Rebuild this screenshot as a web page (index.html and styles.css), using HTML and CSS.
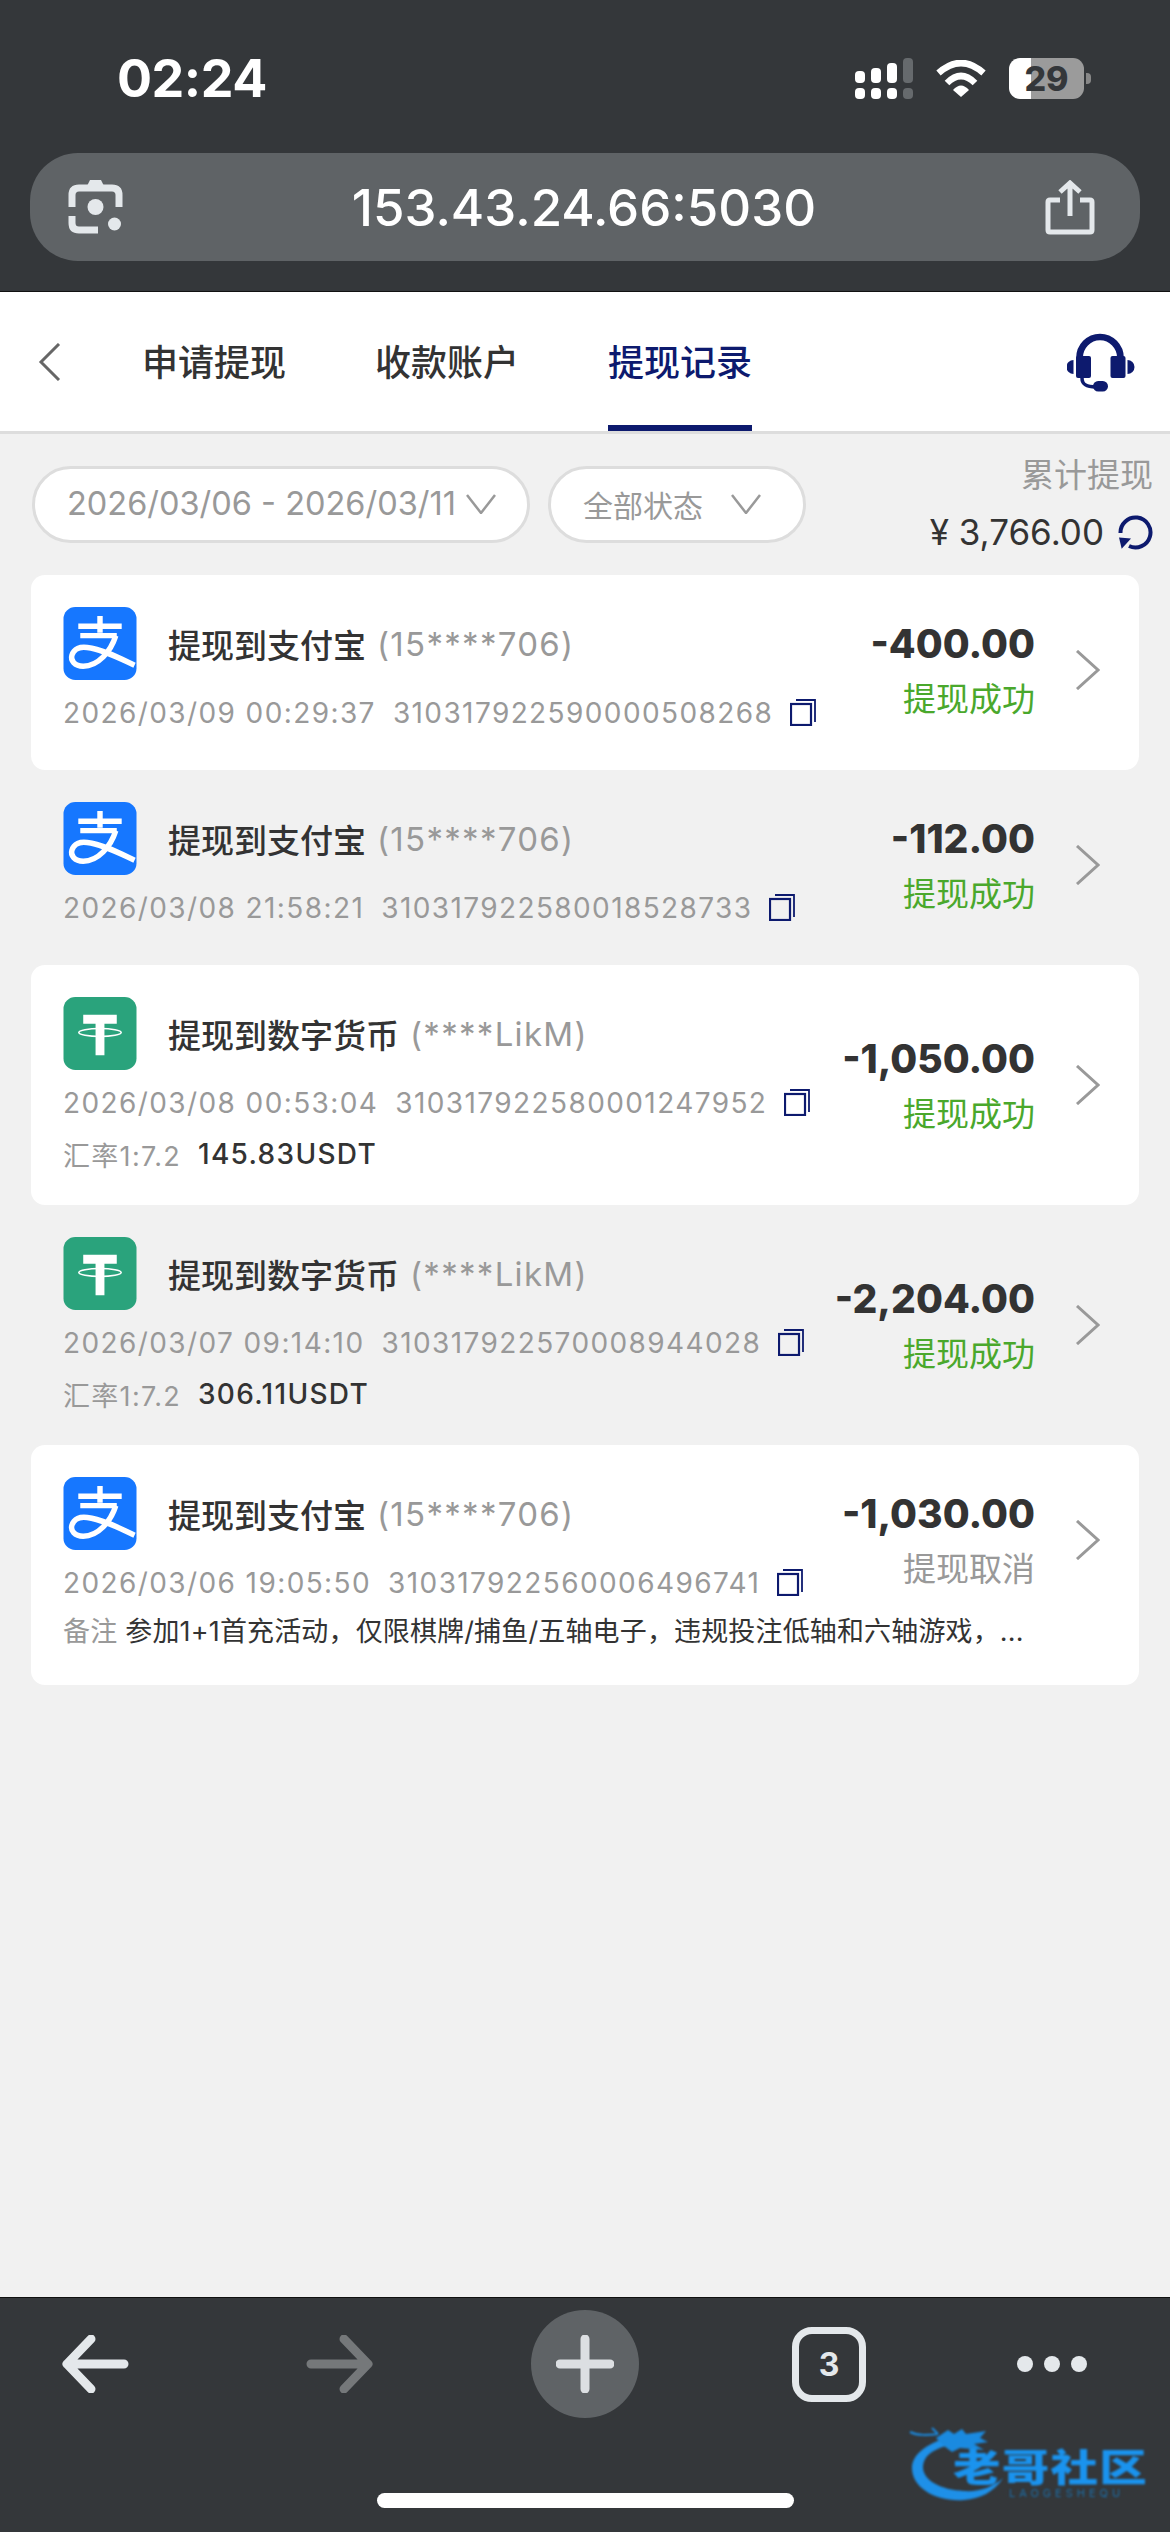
FILE: index.html
```html
<!DOCTYPE html>
<html lang="zh-CN">
<head>
    <meta charset="UTF-8">
    <meta name="viewport" content="width=device-width, initial-scale=1.0">
    <title>提现记录</title>
    <link rel="stylesheet" href="styles.css">
</head>
<body>
    <svg class="defs" width="0" height="0">
        <defs>
            <symbol id="alipay" viewBox="0 0 74 74">
                <rect width="74" height="74" rx="12" fill="#1677ff"/>
                <g fill="none" stroke="#fff" stroke-width="5.5">
                    <path d="M15 19.500H59M37 9V26M17 29H54"/>
                    <path d="M53 29C48 45 35 60 20 60C11 60 7 54 8.500 49C10.500 42 17 40 24 41C40 43 57 52 72 59"/>
                </g>
            </symbol>
            <symbol id="tether" viewBox="0 0 74 74">
                <rect width="74" height="74" rx="12" fill="#2aa37c"/>
                <path d="M20 18H54V27H41.500V59H32.500V27H20Z" fill="#fff"/>
                <ellipse cx="37" cy="36" rx="21.500" ry="4" fill="none" stroke="#fff" stroke-width="1.600"/>
            </symbol>
            <symbol id="copy" viewBox="0 0 26 27">
                <path d="M6 1H25V23" fill="none" stroke="#0d1a6e" stroke-width="1.800"/>
                <rect x="1" y="5" width="20" height="21" fill="none" stroke="#0d1a6e" stroke-width="2.200"/>
            </symbol>
            <symbol id="chevron" viewBox="0 0 25 40">
                <path d="M2 1L23 20L2 39" fill="none" stroke="#999" stroke-width="3"/>
            </symbol>
        </defs>
    </svg>

    <div class="page">
        <header class="browser-top">
            <div class="status-bar">
                <span class="clock">02:24</span>
                <div class="status-icons">
                    <svg class="signal" width="58" height="41" viewBox="0 0 58 41">
                        <g fill="#fff">
                            <rect x="0" y="13" width="10" height="12" rx="4"/>
                            <rect x="0" y="30" width="10" height="11" rx="4"/>
                            <rect x="16" y="10" width="10" height="15" rx="4"/>
                            <rect x="16" y="30" width="10" height="11" rx="4"/>
                            <rect x="32" y="5" width="10" height="20" rx="4"/>
                            <rect x="32" y="30" width="10" height="11" rx="4"/>
                        </g>
                        <g fill="#666a6d">
                            <rect x="48" y="0" width="10" height="25" rx="4"/>
                            <rect x="48" y="30" width="10" height="11" rx="4"/>
                        </g>
                    </svg>
                    <svg class="wifi" width="50" height="37" viewBox="0 0 50 37">
                        <g fill="none" stroke="#fff" stroke-width="6.500">
                            <path d="M2.500 13Q25 -7 47.500 13"/>
                            <path d="M11 23Q25 9 39 23"/>
                        </g>
                        <path d="M17 30Q25 21 33 30L25 37Z" fill="#fff"/>
                    </svg>
                    <div class="battery"><span>29</span></div>
                </div>
            </div>
            <div class="url-bar">
                <svg width="55" height="54" viewBox="0 0 55 54">
                    <g fill="none" stroke="#e4e8eb" stroke-width="7">
                        <path d="M4 27V15Q4 8 11 8H44Q51 8 51 15V27"/>
                        <path d="M4 36V43Q4 50 11 50H30"/>
                    </g>
                    <path d="M18 8L22 0H33L37 8Z" fill="#e4e8eb"/>
                    <circle cx="27.500" cy="27" r="8" fill="#e4e8eb"/>
                    <circle cx="46.500" cy="44" r="6.500" fill="#e4e8eb"/>
                </svg>
                <span class="url-text">153.43.24.66:5030</span>
                <svg width="50" height="55" viewBox="0 0 50 55">
                    <g fill="none" stroke="#e4e8eb" stroke-width="5">
                        <path d="M15 20H5Q3 20 3 22V50Q3 52 5 52H45Q47 52 47 50V22Q47 20 45 20H35"/>
                        <path d="M25 36V3M15 12L25 3L35 12"/>
                    </g>
                </svg>
            </div>
        </header>

        <nav class="tabs">
            <svg class="tabs-back" width="23" height="38" viewBox="0 0 23 38">
                <path d="M21 1L3 19L21 37" fill="none" stroke="#666" stroke-width="3"/>
            </svg>
            <a class="tab">申请提现</a>
            <a class="tab">收款账户</a>
            <a class="tab tab-active">提现记录</a>
            <svg class="headset" width="68" height="60" viewBox="27 20 68 60">
                <path d="M39.500 48V46A20.500 21 0 0 1 80.500 46V48" fill="none" stroke="#0d1a6e" stroke-width="6.700"/>
                <g fill="#0d1a6e">
                    <rect x="36" y="44" width="15" height="22" rx="2"/>
                    <rect x="70.500" y="44" width="15" height="22" rx="2"/>
                    <path d="M33.500 48A7 7 0 0 0 33.500 62Z"/>
                    <path d="M87.500 48A7 7 0 0 1 87.500 62Z"/>
                    <rect x="53" y="69" width="15" height="10.500" rx="5.200"/>
                </g>
                <path d="M42 66C42 73 47 75 56 75" fill="none" stroke="#0d1a6e" stroke-width="3.500"/>
            </svg>
        </nav>

        <main class="content">
            <div class="filter-bar">
                <div class="pill pill-date">
                    <span>2026/03/06 - 2026/03/11</span>
                    <svg width="30" height="20" viewBox="0 0 30 20"><path d="M1 1L15 19L29 1" fill="none" stroke="#999" stroke-width="2.500"/></svg>
                </div>
                <div class="pill pill-status">
                    <span>全部状态</span>
                    <svg width="30" height="20" viewBox="0 0 30 20"><path d="M1 1L15 19L29 1" fill="none" stroke="#999" stroke-width="2.500"/></svg>
                </div>
                <div class="total">
                    <div class="total-label">累计提现</div>
                    <div class="total-amount">
                        <span>¥ 3,766.00</span>
                        <svg width="35" height="35" viewBox="0 0 35 35">
                            <path d="M2.500 18A15 15 0 1 1 11 31" fill="none" stroke="#0d1a6e" stroke-width="4"/>
                            <path d="M1 22.500L13 23.500L3.700 33.700Z" fill="#0d1a6e"/>
                        </svg>
                    </div>
                </div>
            </div>

            <div class="records">
                <article class="record">
                    <div class="record-row">
                        <div class="record-main">
                            <div class="record-title">
                                <svg class="record-logo"><use href="#alipay"/></svg>
                                <span>提现到支付宝</span>
                                <span class="account">(15****706)</span>
                            </div>
                            <div class="record-meta">
                                <span>2026/03/09 00:29:37</span>
                                <span>310317922590000508268</span>
                                <svg class="copy"><use href="#copy"/></svg>
                            </div>
                        </div>
                        <div class="record-side">
                            <div class="amount">-400.00</div>
                            <div class="state state-ok">提现成功</div>
                        </div>
                        <svg class="arrow"><use href="#chevron"/></svg>
                    </div>
                </article>

                <article class="record">
                    <div class="record-row">
                        <div class="record-main">
                            <div class="record-title">
                                <svg class="record-logo"><use href="#alipay"/></svg>
                                <span>提现到支付宝</span>
                                <span class="account">(15****706)</span>
                            </div>
                            <div class="record-meta">
                                <span>2026/03/08 21:58:21</span>
                                <span>310317922580018528733</span>
                                <svg class="copy"><use href="#copy"/></svg>
                            </div>
                        </div>
                        <div class="record-side">
                            <div class="amount">-112.00</div>
                            <div class="state state-ok">提现成功</div>
                        </div>
                        <svg class="arrow"><use href="#chevron"/></svg>
                    </div>
                </article>

                <article class="record">
                    <div class="record-row">
                        <div class="record-main">
                            <div class="record-title">
                                <svg class="record-logo"><use href="#tether"/></svg>
                                <span>提现到数字货币</span>
                                <span class="account">(****LikM)</span>
                            </div>
                            <div class="record-meta">
                                <span>2026/03/08 00:53:04</span>
                                <span>310317922580001247952</span>
                                <svg class="copy"><use href="#copy"/></svg>
                            </div>
                            <div class="record-extra">
                                <span class="extra-label">汇率1:7.2</span>
                                <span class="extra-value">145.83USDT</span>
                            </div>
                        </div>
                        <div class="record-side">
                            <div class="amount">-1,050.00</div>
                            <div class="state state-ok">提现成功</div>
                        </div>
                        <svg class="arrow"><use href="#chevron"/></svg>
                    </div>
                </article>

                <article class="record">
                    <div class="record-row">
                        <div class="record-main">
                            <div class="record-title">
                                <svg class="record-logo"><use href="#tether"/></svg>
                                <span>提现到数字货币</span>
                                <span class="account">(****LikM)</span>
                            </div>
                            <div class="record-meta">
                                <span>2026/03/07 09:14:10</span>
                                <span>310317922570008944028</span>
                                <svg class="copy"><use href="#copy"/></svg>
                            </div>
                            <div class="record-extra">
                                <span class="extra-label">汇率1:7.2</span>
                                <span class="extra-value">306.11USDT</span>
                            </div>
                        </div>
                        <div class="record-side">
                            <div class="amount">-2,204.00</div>
                            <div class="state state-ok">提现成功</div>
                        </div>
                        <svg class="arrow"><use href="#chevron"/></svg>
                    </div>
                </article>

                <article class="record">
                    <div class="record-row">
                        <div class="record-main">
                            <div class="record-title">
                                <svg class="record-logo"><use href="#alipay"/></svg>
                                <span>提现到支付宝</span>
                                <span class="account">(15****706)</span>
                            </div>
                            <div class="record-meta">
                                <span>2026/03/06 19:05:50</span>
                                <span>310317922560006496741</span>
                                <svg class="copy"><use href="#copy"/></svg>
                            </div>
                        </div>
                        <div class="record-side">
                            <div class="amount">-1,030.00</div>
                            <div class="state state-off">提现取消</div>
                        </div>
                        <svg class="arrow"><use href="#chevron"/></svg>
                    </div>
                    <div class="record-note">
                        <span class="extra-label">备注</span>
                        <span>参加1+1首充活动，仅限棋牌/捕鱼/五轴电子，违规投注低轴和六轴游戏，...</span>
                    </div>
                </article>
            </div>
        </main>

        <footer class="browser-bottom">
            <div class="toolbar">
                <svg width="68" height="58" viewBox="0 0 68 58">
                    <path d="M63 29H6M30 4L6 29L30 54" fill="none" stroke="#e4e8eb" stroke-width="9" stroke-linecap="round" stroke-linejoin="round"/>
                </svg>
                <svg width="68" height="58" viewBox="0 0 68 58">
                    <path d="M5 29H62M38 4L62 29L38 54" fill="none" stroke="#75787a" stroke-width="9" stroke-linecap="round" stroke-linejoin="round"/>
                </svg>
                <div class="new-tab">
                    <svg width="58" height="58" viewBox="0 0 58 58">
                        <path d="M29 4V54M4 29H54" fill="none" stroke="#dcdfe2" stroke-width="9" stroke-linecap="round"/>
                    </svg>
                </div>
                <div class="tab-count">3</div>
                <div class="more"><i></i><i></i><i></i></div>
            </div>
            <div class="home-bar"></div>
            <div class="watermark">
                <svg class="watermark-dragon" width="110" height="85" viewBox="0 0 110 85">
                    <path d="M32 20C12 28 4 38 4 48C4 68 28 82 56 80C72 79 86 72 95 58C84 68 70 72 56 71C32 70 14 60 15 46C16 36 24 30 38 26Z" fill="#1e90e8"/>
                    <path d="M2 12C10 16 20 15 30 14M24 8L30 14" fill="none" stroke="#1a8ae0" stroke-width="2"/>
                    <path d="M28 18L40 10L46 14L54 9L58 14L78 11L72 18L80 22L66 24L76 30L52 28L44 32L36 26Z" fill="#1a8ae0"/>
                </svg>
                <span class="watermark-name">老哥社区</span>
                <span class="watermark-sub">LAOGESHEQU</span>
            </div>
        </footer>
    </div>
</body>
</html>
```

FILE: styles.css
```css
:root {
    --dark-bar: #34373a;
    --navy: #0d1a6e;
    --text-color: #333;
    --muted: #999;
    --background-color: #f1f1f1;
}

* {
    box-sizing: border-box;
}

body {
    margin: 0;
    background-color: var(--background-color);
    color: var(--text-color);
    font-family: Inter, "Noto Sans CJK SC", sans-serif;
}

.defs {
    position: absolute;
}

.page {
    display: flex;
    flex-direction: column;
    height: 2532px;
    overflow: hidden;
}

/* Browser chrome, top */
.browser-top {
    height: 292px;
    padding: 0 30px;
    background-color: var(--dark-bar);
    border-bottom: 1px solid #111;
    color: #fff;
}

.status-bar {
    display: flex;
    align-items: center;
    justify-content: space-between;
    height: 153px;
    padding: 3px 56px 0 87px;
}

.clock {
    font-size: 52px;
    font-weight: 700;
    letter-spacing: -0.5px;
}

.status-icons {
    display: flex;
    align-items: center;
    gap: 23px;
}

.battery {
    position: relative;
    width: 75px;
    height: 41px;
    border-radius: 11px;
    background: linear-gradient(90deg, #fff 29%, #9b9b9b 29%);
    color: #34373a;
    font-size: 34px;
    font-weight: 800;
    line-height: 41px;
    text-align: center;
}

.battery::after {
    content: "";
    position: absolute;
    top: 15px;
    right: -7px;
    width: 5px;
    height: 11px;
    border-radius: 0 4px 4px 0;
    background-color: #888;
}

.url-bar {
    display: flex;
    align-items: center;
    justify-content: space-between;
    height: 108px;
    padding: 0 45px 0 38px;
    border-radius: 48px;
    background-color: #5f6366;
}

.url-text {
    font-size: 51px;
    font-weight: 500;
}

/* Page tabs */
.tabs {
    display: flex;
    align-items: stretch;
    height: 142px;
    padding: 0 35px 0 38px;
    background-color: #fff;
    border-bottom: 3px solid #ddd;
}

.tabs-back {
    align-self: center;
    margin-right: 81px;
}

.tab {
    display: flex;
    align-items: center;
    margin-right: 89px;
    padding-top: 3px;
    border-bottom: 6px solid transparent;
    font-size: 36px;
    font-weight: 500;
}

.tab-active {
    border-bottom-color: var(--navy);
    color: var(--navy);
}

.headset {
    align-self: center;
    margin-left: auto;
}

/* Filters */
.content {
    flex: 1;
}

.filter-bar {
    display: flex;
    align-items: flex-start;
    height: 141px;
    padding: 21px 17px 0 32px;
}

.pill {
    display: flex;
    align-items: center;
    justify-content: space-between;
    height: 77px;
    margin-top: 11px;
    padding-bottom: 2px;
    border: 3px solid #ddd;
    border-radius: 39px;
    background-color: #fff;
    color: var(--muted);
    font-size: 32.5px;
}

.pill-date {
    width: 498px;
    padding-right: 31px;
    padding-left: 32px;
}

.pill-status {
    width: 258px;
    margin-left: 18px;
    padding-right: 42px;
    padding-left: 32px;
    font-size: 30px;
}

.total {
    margin-left: auto;
    text-align: right;
}

.total-label {
    color: var(--muted);
    font-size: 33px;
    line-height: 40px;
}

.total-amount {
    display: flex;
    align-items: center;
    gap: 14px;
    margin-top: 17px;
    font-size: 35px;
    line-height: 40px;
}

/* Records */
.records {
    padding: 0 31px;
}

.record {
    min-height: 195px;
    padding: 32px 39px 32px 32px;
    border-radius: 14px;
}

.record:nth-child(odd) {
    background-color: #fff;
}

.record-row {
    display: flex;
    align-items: center;
}

.record-main {
    flex: 1;
}

.record-title {
    display: flex;
    align-items: center;
    height: 73px;
    font-size: 33px;
    font-weight: 500;
}

.record-logo {
    width: 74px;
    height: 73px;
    margin-right: 31px;
}

.account {
    margin-left: 11px;
    color: var(--muted);
    font-weight: 400;
    letter-spacing: 1.3px;
}

.record-meta {
    display: flex;
    align-items: center;
    gap: 17px;
    height: 39px;
    margin-top: 13px;
    color: var(--muted);
    font-size: 28px;
    letter-spacing: 1.4px;
}

.copy {
    width: 26px;
    height: 27px;
}

.record-extra {
    display: flex;
    align-items: center;
    gap: 17px;
    height: 38px;
    margin-top: 13px;
    font-size: 27px;
    letter-spacing: 1.3px;
}

.extra-value {
    font-size: 28px;
    font-weight: 500;
}

.record-note {
    display: flex;
    align-items: center;
    gap: 8px;
    height: 38px;
    margin: 8px 0 5px;
    font-size: 27px;
    letter-spacing: 0.15px;
}

.extra-label {
    color: var(--muted);
}

.record-side {
    text-align: right;
}

.amount {
    font-size: 39px;
    font-weight: 800;
    line-height: 49px;
}

.state {
    margin-top: 9px;
    font-size: 33px;
    line-height: 44px;
}

.state-ok {
    color: #4aa82c;
}

.state-off {
    color: var(--muted);
}

.arrow {
    width: 25px;
    height: 40px;
    margin-left: 40px;
}

/* Browser chrome, bottom */
.browser-bottom {
    position: relative;
    height: 235px;
    background-color: var(--dark-bar);
    border-top: 1px solid #111;
}

.toolbar {
    display: grid;
    grid-template-columns: 190px 300px 190px 298px 148px;
    justify-items: center;
    align-items: center;
    height: 132px;
}

.new-tab {
    display: flex;
    align-items: center;
    justify-content: center;
    width: 108px;
    height: 108px;
    border-radius: 50%;
    background-color: #5f6366;
}

.tab-count {
    width: 74px;
    height: 75px;
    border: 7px solid #e4e8eb;
    border-radius: 20px;
    color: #e4e8eb;
    font-size: 32px;
    font-weight: 700;
    line-height: 61px;
    text-align: center;
}

.more {
    display: flex;
    gap: 11px;
}

.more i {
    width: 16px;
    height: 16px;
    border-radius: 50%;
    background-color: #e4e8eb;
}

.home-bar {
    width: 417px;
    height: 15px;
    margin: 63px auto 0;
    border-radius: 8px;
    background-color: #fff;
}

.watermark {
    position: absolute;
    top: 122px;
    left: 908px;
    width: 250px;
    height: 90px;
    filter: blur(0.8px);
}

.watermark-dragon {
    position: absolute;
    top: 0;
    left: 0;
}

.watermark-name {
    position: absolute;
    top: 30px;
    left: 45px;
    color: #1a93ee;
    font-size: 38px;
    font-weight: 900;
    letter-spacing: 1px;
    line-height: 34px;
    white-space: nowrap;
    transform: scaleX(1.25);
    transform-origin: left center;
}

.watermark-sub {
    position: absolute;
    top: 68px;
    left: 101px;
    color: #1c6ea8;
    font-size: 11px;
    letter-spacing: 4px;
    line-height: 11px;
    white-space: nowrap;
}
```
